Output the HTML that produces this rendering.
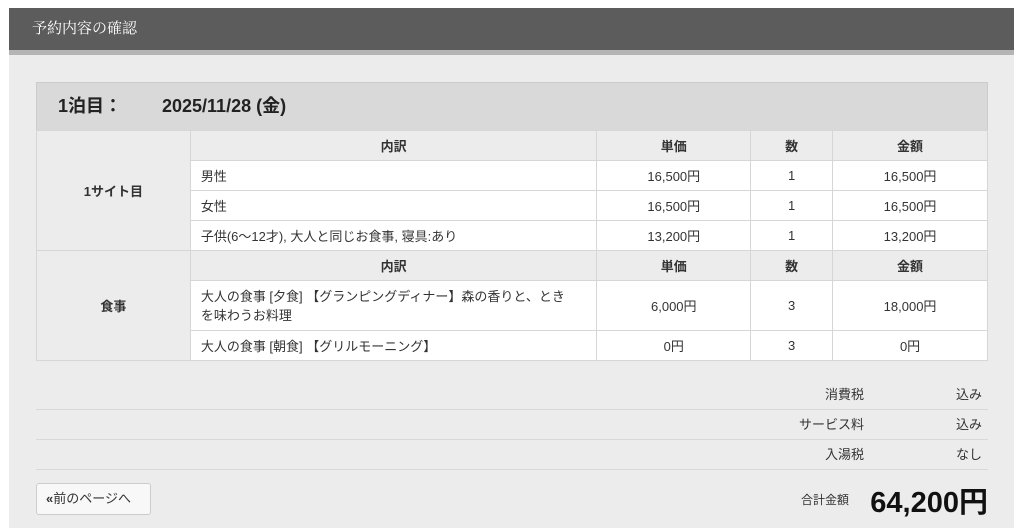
<!DOCTYPE html>
<html><head><meta charset="utf-8"><style>
*{margin:0;padding:0;box-sizing:border-box}
body{width:1024px;height:528px;background:#fff;font-family:"Liberation Sans","Noto Sans CJK JP",sans-serif;color:#333;position:relative;overflow:hidden;font-size:13px}
.hd{position:absolute;left:9px;top:8px;width:1005px;height:43px;background:#5c5c5c;color:#fff;font-size:15px;line-height:40px;padding-left:23px;font-family:"Noto Serif CJK SC",serif}
.strip{position:absolute;left:9px;top:50px;width:1005px;height:5px;background:#b5b5b5}
.panel{position:absolute;left:9px;top:55px;width:1005px;height:473px;background:#ececec}
.date{position:absolute;left:36px;top:82px;width:952px;height:49px;background:#d9d9d9;border:1px solid #ccc;font-size:18px;font-weight:bold;color:#222;line-height:47px}
.date span{position:absolute}
table{position:absolute;left:36px;top:130px;width:952px;border-collapse:collapse}
td{border:1px solid #d6d6d6;height:30px;font-size:13px;text-align:center;background:#fff}
td.l{background:#ececec;font-weight:bold;color:#222}
tr.h td{background:#ececec;font-weight:bold;color:#333}
td.t{text-align:left;padding-left:10px}
.sr{position:absolute;left:36px;width:952px;height:30px;border-bottom:1px solid #d8d8d8;font-size:13px;line-height:30px}
.sr .a{position:absolute;right:124px}.sr .b{position:absolute;right:6px}
.btn{position:absolute;left:36px;top:483px;width:115px;height:32px;background:#f8f8f8;border:1px solid #ccc;border-radius:3px;font-size:13px;line-height:30px;padding-left:9px}
.tot{position:absolute;right:36px;top:479px;font-size:29px;font-weight:bold;color:#111}
.tl{position:absolute;left:801px;top:491px;font-size:12px}
</style></head><body>
<div class="hd">予約内容の確認</div><div class="strip"></div><div class="panel"></div>
<div class="date"><span style="left:21px">1泊目：</span><span style="left:125px">2025/11/28 (金)</span></div>
<table>
<colgroup><col style="width:154px"><col style="width:407px"><col style="width:154px"><col style="width:82px"><col style="width:155px"></colgroup>
<tr class="h"><td class="l" rowspan="4">1サイト目</td><td>内訳</td><td>単価</td><td>数</td><td>金額</td></tr>
<tr><td class="t">男性</td><td>16,500円</td><td>1</td><td>16,500円</td></tr>
<tr><td class="t">女性</td><td>16,500円</td><td>1</td><td>16,500円</td></tr>
<tr><td class="t">子供(6～12才), 大人と同じお食事, 寝具:あり</td><td>13,200円</td><td>1</td><td>13,200円</td></tr>
<tr class="h"><td class="l" rowspan="3">食事</td><td>内訳</td><td>単価</td><td>数</td><td>金額</td></tr>
<tr><td class="t" style="height:50px;line-height:19px">大人の食事 [夕食] 【グランピングディナー】森の香りと、とき<br>を味わうお料理</td><td>6,000円</td><td>3</td><td>18,000円</td></tr>
<tr><td class="t">大人の食事 [朝食] 【グリルモーニング】</td><td>0円</td><td>3</td><td>0円</td></tr>
</table>
<div class="sr" style="top:380px"><span class="a">消費税</span><span class="b">込み</span></div>
<div class="sr" style="top:410px"><span class="a">サービス料</span><span class="b">込み</span></div>
<div class="sr" style="top:440px"><span class="a">入湯税</span><span class="b">なし</span></div>
<div class="btn"><b>«</b>前のページへ</div>
<div class="tl">合計金額</div><div class="tot">64,200円</div>
</body></html>
